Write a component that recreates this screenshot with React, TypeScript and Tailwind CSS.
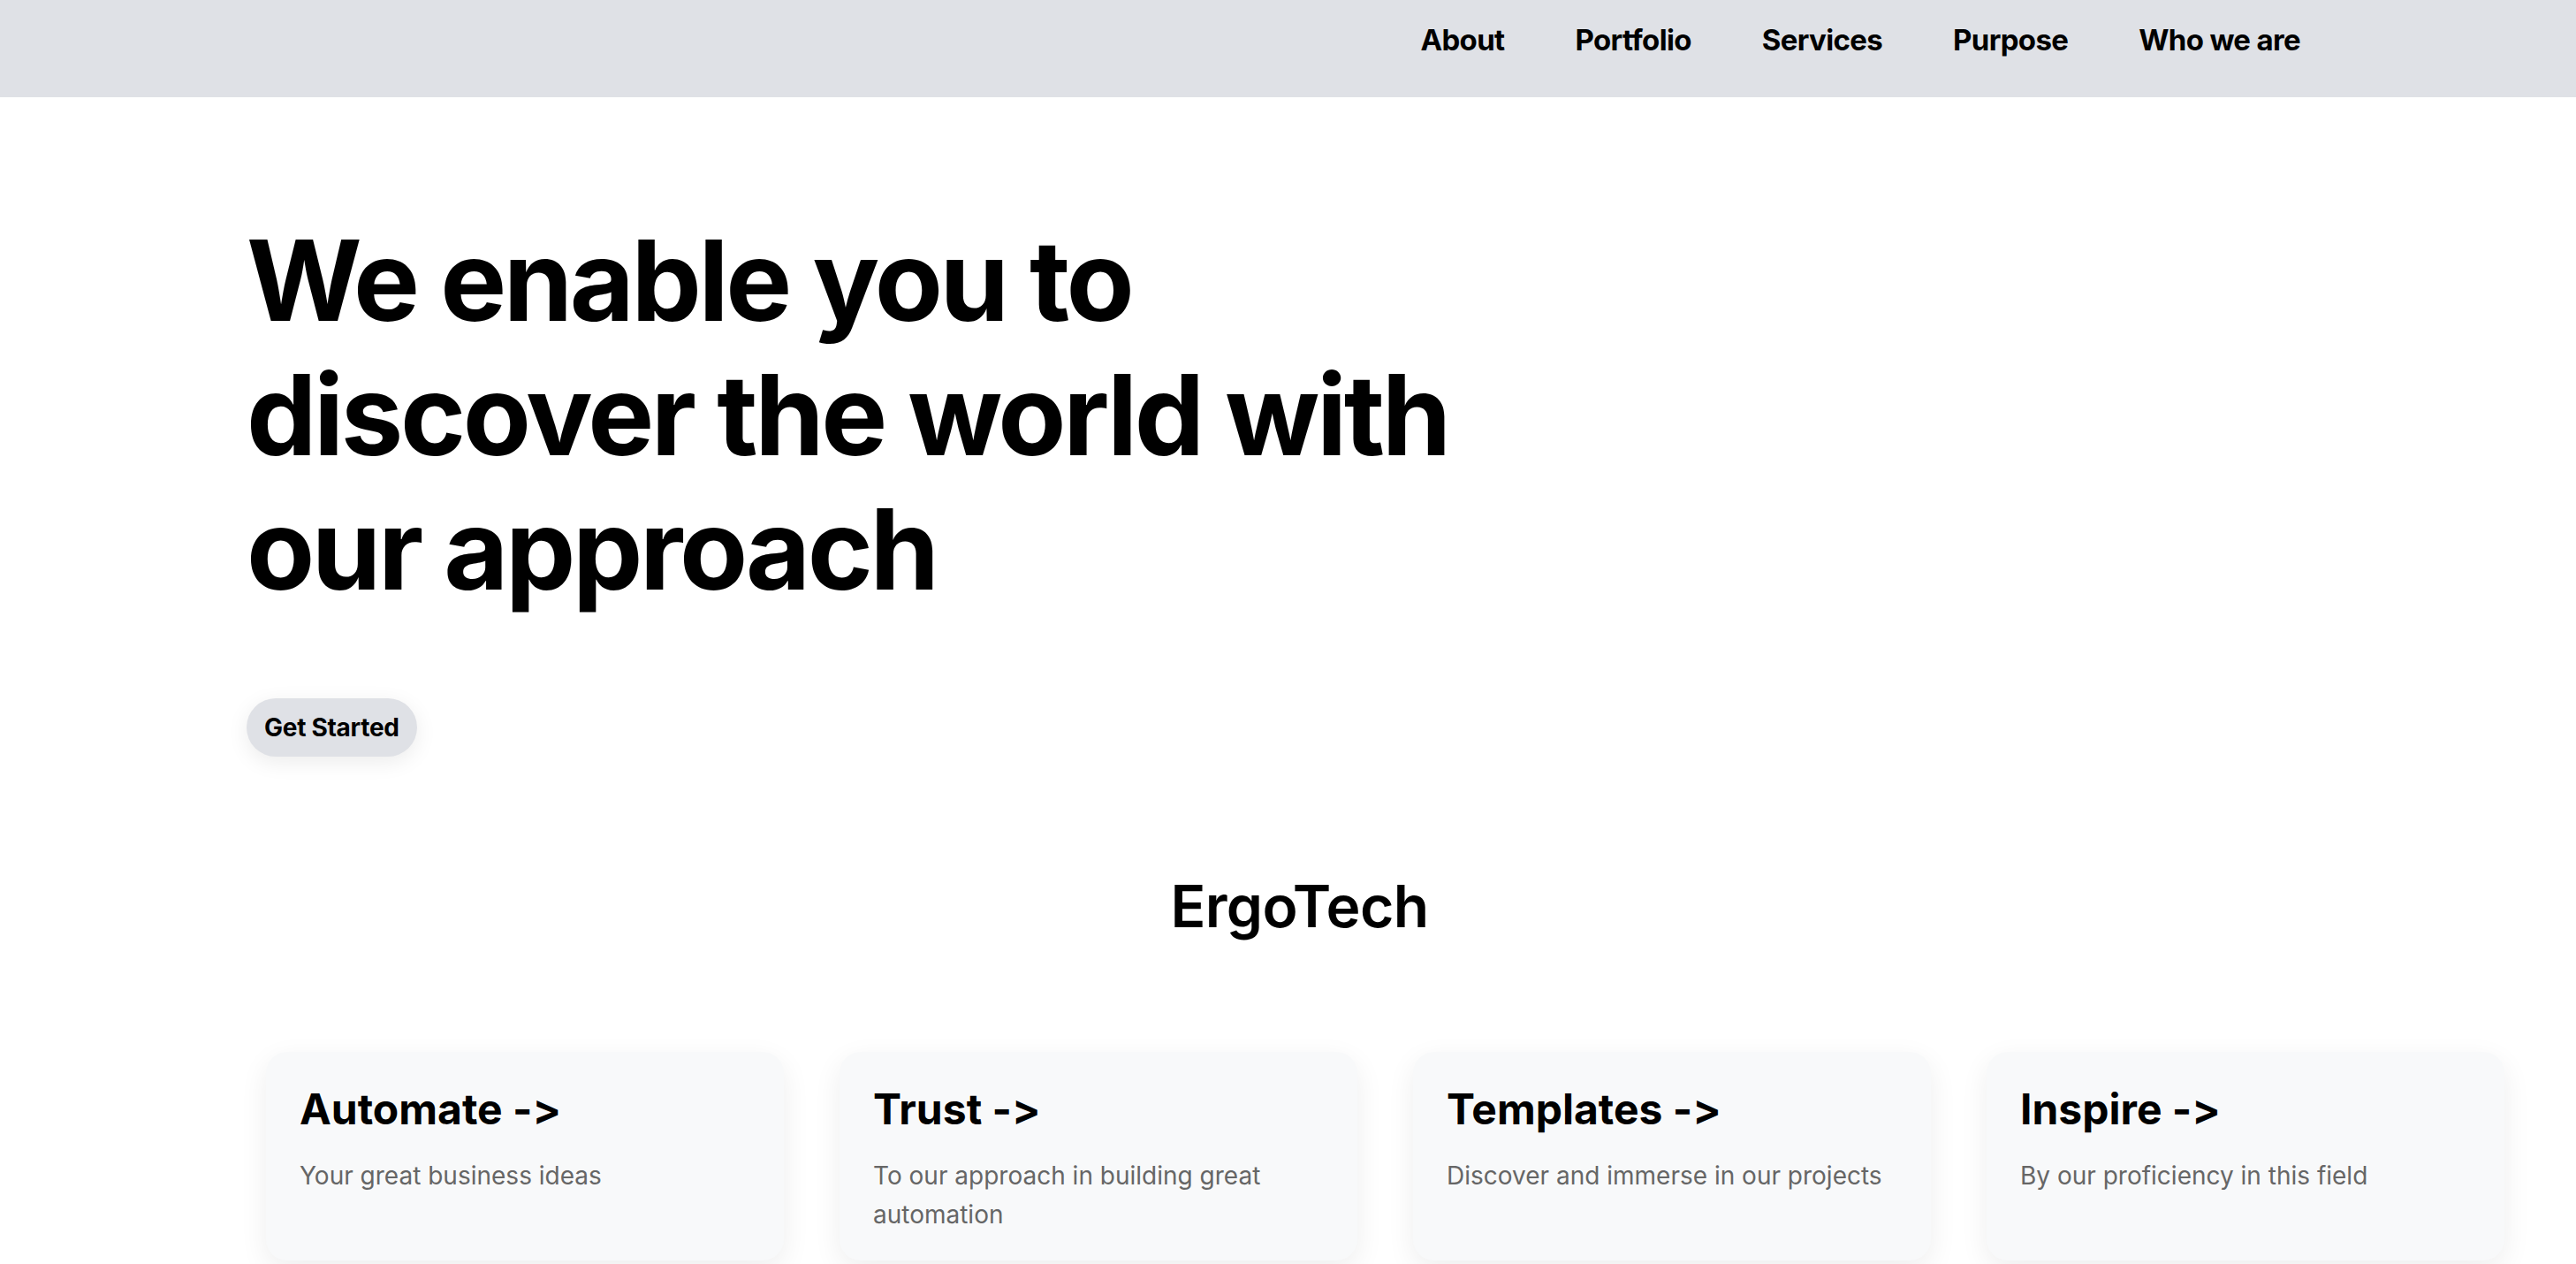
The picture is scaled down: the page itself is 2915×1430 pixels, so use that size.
import React from "react";

const cards = [
  { title: "Automate ->", text: "Your great business ideas" },
  { title: "Trust ->", text: "To our approach in building great automation" },
  { title: "Templates ->", text: "Discover and immerse in our projects" },
  { title: "Inspire ->", text: "By our proficiency in this field" },
];

const navItems = ["About", "Portfolio", "Services", "Purpose", "Who we are"];

export default function App() {
  return (
    <div className="min-h-screen bg-white font-['Inter','Liberation_Sans',sans-serif] text-black">
      <nav className="h-[110px] bg-[#dfe1e6] flex justify-end items-start pt-[25px] pr-[312px] gap-[80px]">
        {navItems.map((n) => (
          <a key={n} className="text-[33px] leading-[40px] font-bold tracking-[-0.02em]">
            {n}
          </a>
        ))}
      </nav>

      <section className="pl-[279px] pt-[131px]">
        <h1 className="text-[126px] leading-[152px] font-bold tracking-[-0.027em]">
          We enable you to
          <br />
          discover the world with
          <br />
          our approach
        </h1>
        <button className="mt-[93px] h-[66px] px-[20px] rounded-full bg-[#dfe1e6] text-[28px] font-bold tracking-[-0.01em] shadow-[0_6px_24px_rgba(0,0,0,0.08)]">
          Get Started
        </button>
      </section>

      <h2 className="mt-[130px] pl-[26px] text-center text-[66px] leading-[78px] font-semibold tracking-[-0.01em]">
        ErgoTech
      </h2>

      <section className="mt-[126px] pl-[301px] pr-[81px] grid grid-cols-4 gap-[63px]">
        {cards.map((c) => (
          <div
            key={c.title}
            className="h-[236px] rounded-3xl bg-[#f8f9fa] pt-[36px] px-[38px] shadow-[0_10px_32px_rgba(0,0,0,0.07)]"
          >
            <h3 className="text-[48px] leading-[58px] font-bold [font-feature-settings:'calt'_0,'liga'_0]">
              {c.title}
            </h3>
            <p className="mt-[24px] text-[28px] leading-[44px] text-[#666]">{c.text}</p>
          </div>
        ))}
      </section>
    </div>
  );
}
